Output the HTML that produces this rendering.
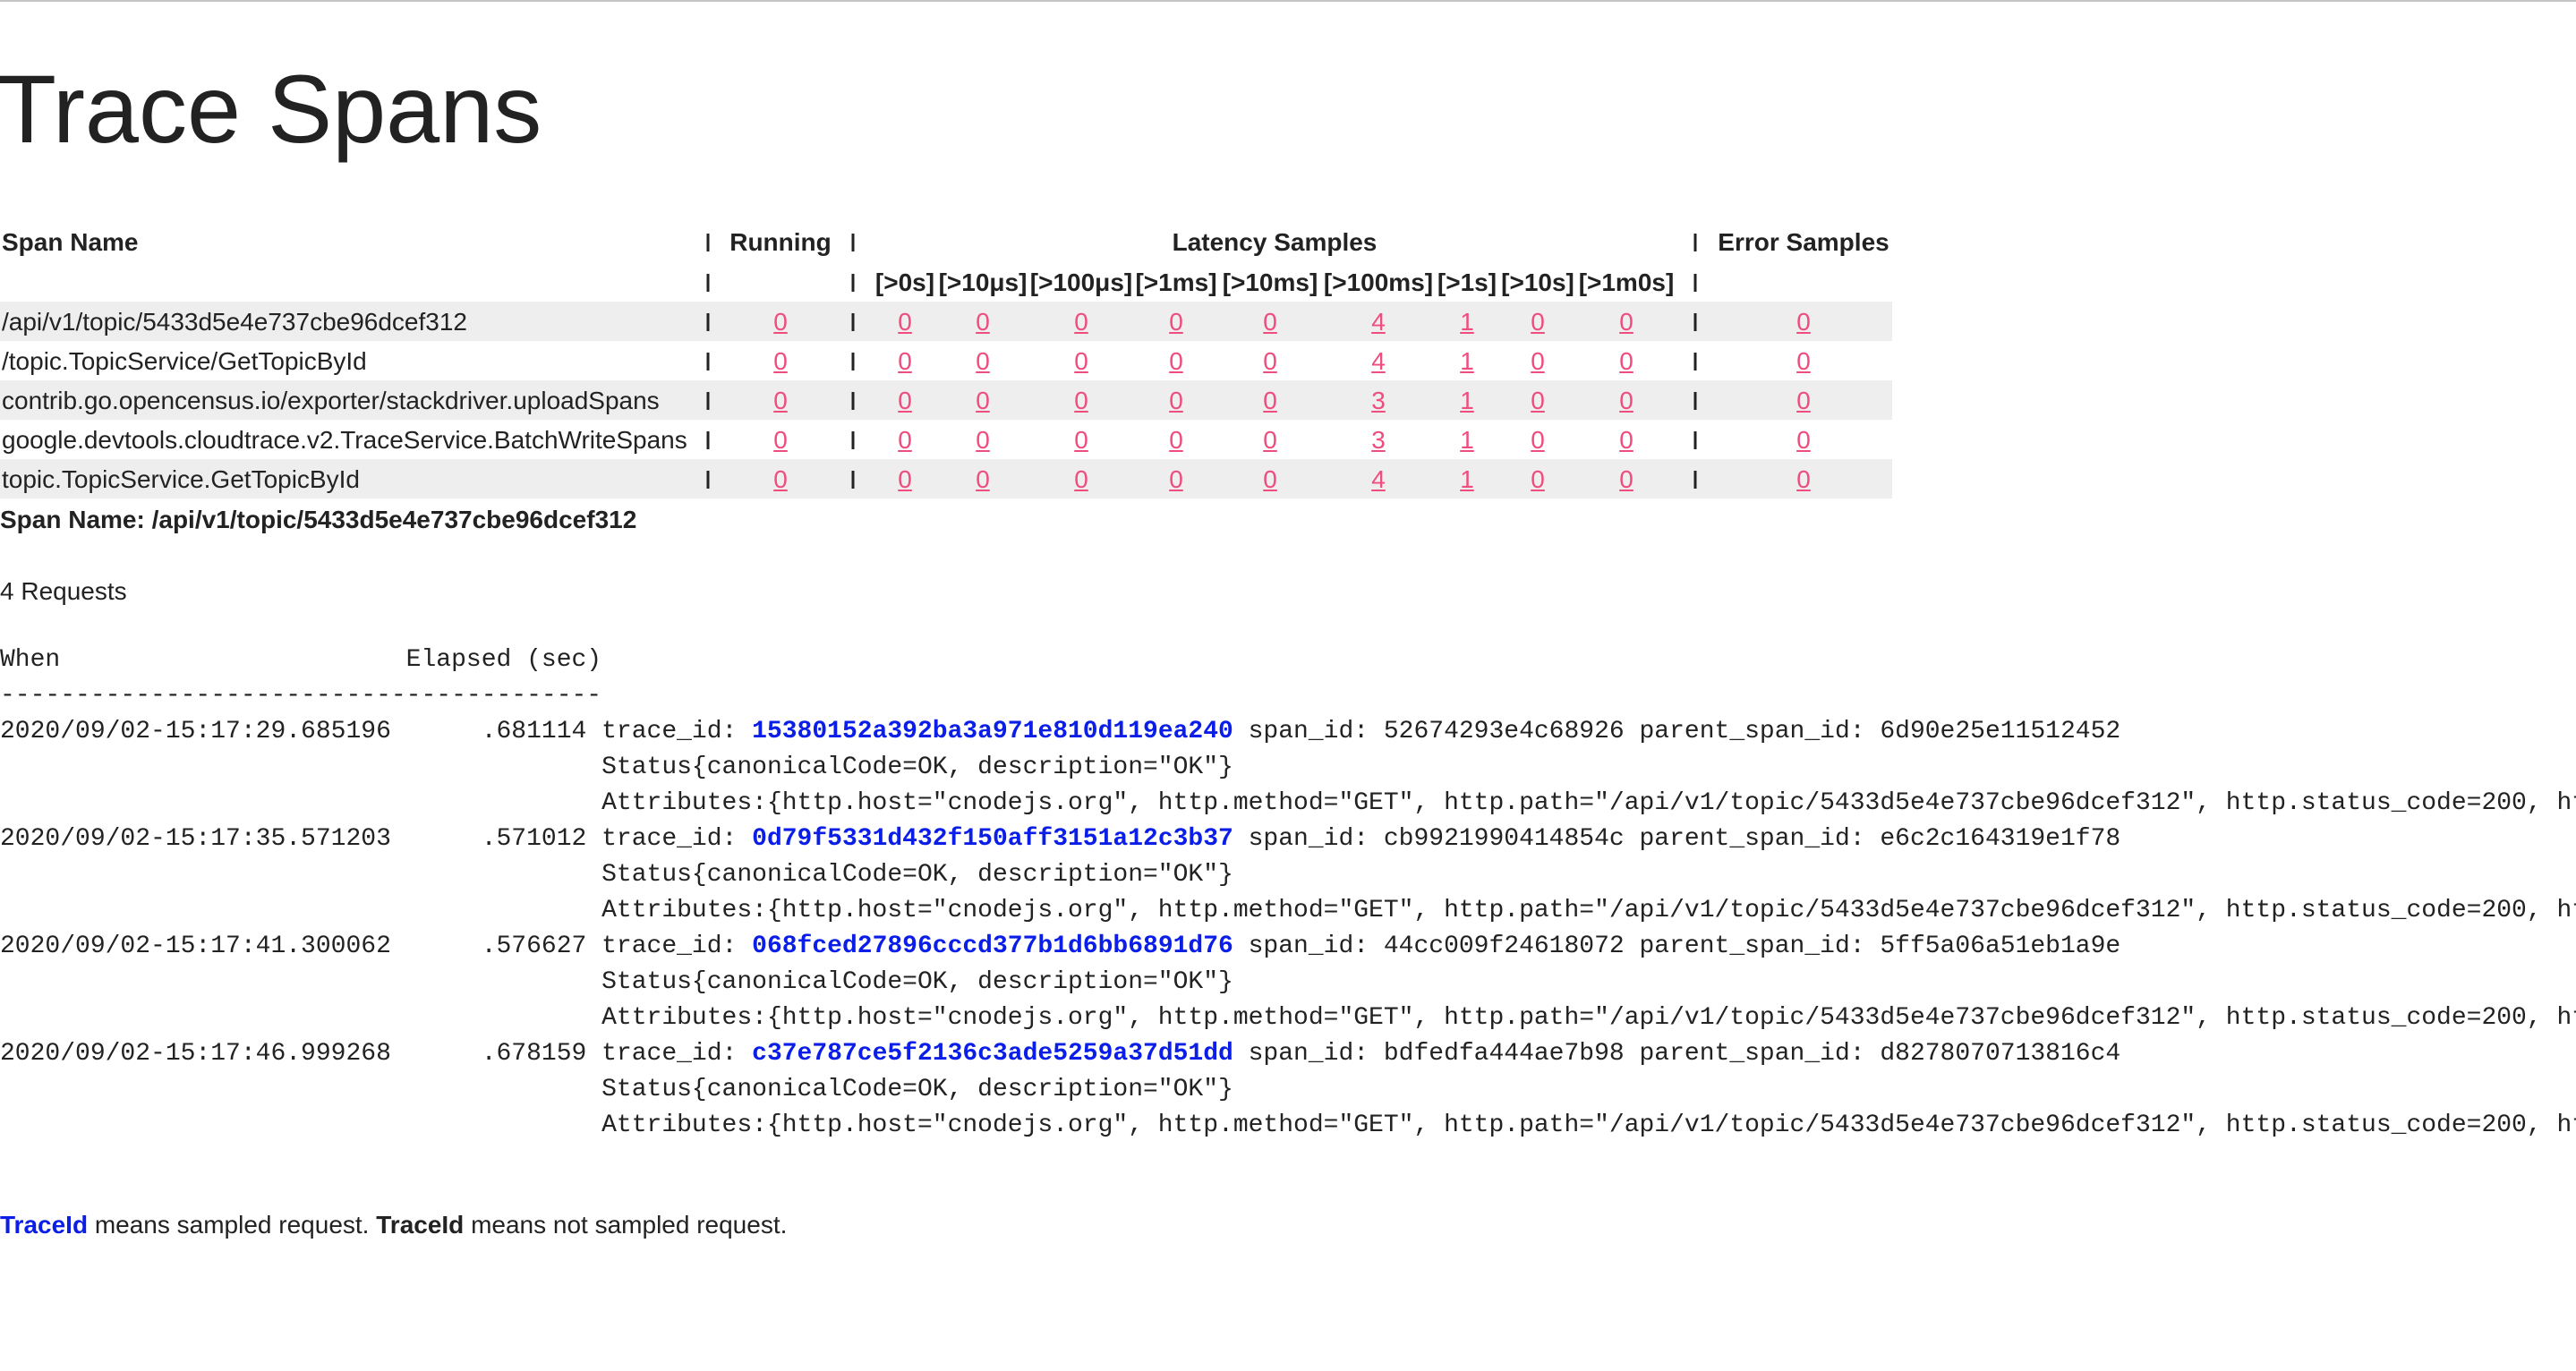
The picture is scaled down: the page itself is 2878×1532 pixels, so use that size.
<!DOCTYPE html>
<html><head><meta charset="utf-8">
<style>
html,body{margin:0;padding:0;background:#fff;width:2878px;height:1532px;overflow:hidden;position:relative;color:#222;font-family:"Liberation Sans",Arial,sans-serif;}
.topline{position:absolute;left:0;top:0;width:2878px;height:2px;background:#c4c4c4;}
.t{position:absolute;white-space:nowrap;transform:translateY(-50%);font-size:28px;line-height:1;}
.c{position:absolute;white-space:nowrap;transform:translate(-50%,-50%);font-size:28px;line-height:1;}
.b{font-weight:bold;}
.band{position:absolute;left:0;width:2114px;height:44px;background:#eeeeee;}
.bar{position:absolute;width:3px;height:20px;background:#222;transform:translate(-50%,-50%);}
a{color:#ee4d7e;text-decoration:underline;}
.wrap{position:absolute;left:0;top:0;width:2878px;height:1532px;overflow:hidden;}
.mono{position:absolute;left:0;top:718px;font-family:"Liberation Mono","Courier New",monospace;font-size:28px;line-height:40px;white-space:pre;color:#222;margin:0;}
.mono b{color:#0a1ee8;font-weight:bold;}
</style></head><body><div class="wrap">
<div class="topline"></div>
<div class="t" style="left:-3px;top:122px;font-size:108px;">Trace Spans</div>

<div class="band" style="top:337px"></div>
<div class="band" style="top:425px"></div>
<div class="band" style="top:513px"></div>

<div class="t b" style="left:2px;top:271px">Span Name</div>
<div class="c b" style="left:872px;top:271px">Running</div>
<div class="c b" style="left:1424px;top:271px">Latency Samples</div>
<div class="c b" style="left:2015px;top:271px">Error Samples</div>

<div class="c b" style="left:1011px;top:316px">[&gt;0s]</div>
<div class="c b" style="left:1098px;top:316px">[&gt;10μs]</div>
<div class="c b" style="left:1208px;top:316px">[&gt;100μs]</div>
<div class="c b" style="left:1314px;top:316px">[&gt;1ms]</div>
<div class="c b" style="left:1419px;top:316px">[&gt;10ms]</div>
<div class="c b" style="left:1540px;top:316px">[&gt;100ms]</div>
<div class="c b" style="left:1639px;top:316px">[&gt;1s]</div>
<div class="c b" style="left:1718px;top:316px">[&gt;10s]</div>
<div class="c b" style="left:1817px;top:316px">[&gt;1m0s]</div>

<div class="bar" style="left:791px;top:271px"></div><div class="bar" style="left:953px;top:271px"></div><div class="bar" style="left:1894px;top:271px"></div>
<div class="bar" style="left:791px;top:316px"></div><div class="bar" style="left:953px;top:316px"></div><div class="bar" style="left:1894px;top:316px"></div>
<div class="bar" style="left:791px;top:360px"></div><div class="bar" style="left:953px;top:360px"></div><div class="bar" style="left:1894px;top:360px"></div>
<div class="bar" style="left:791px;top:404px"></div><div class="bar" style="left:953px;top:404px"></div><div class="bar" style="left:1894px;top:404px"></div>
<div class="bar" style="left:791px;top:448px"></div><div class="bar" style="left:953px;top:448px"></div><div class="bar" style="left:1894px;top:448px"></div>
<div class="bar" style="left:791px;top:492px"></div><div class="bar" style="left:953px;top:492px"></div><div class="bar" style="left:1894px;top:492px"></div>
<div class="bar" style="left:791px;top:536px"></div><div class="bar" style="left:953px;top:536px"></div><div class="bar" style="left:1894px;top:536px"></div>

<div class="t" style="left:2px;top:360px">/api/v1/topic/5433d5e4e737cbe96dcef312</div>
<div class="c" style="left:872px;top:360px"><a>0</a></div>
<div class="c" style="left:1011px;top:360px"><a>0</a></div>
<div class="c" style="left:1098px;top:360px"><a>0</a></div>
<div class="c" style="left:1208px;top:360px"><a>0</a></div>
<div class="c" style="left:1314px;top:360px"><a>0</a></div>
<div class="c" style="left:1419px;top:360px"><a>0</a></div>
<div class="c" style="left:1540px;top:360px"><a>4</a></div>
<div class="c" style="left:1639px;top:360px"><a>1</a></div>
<div class="c" style="left:1718px;top:360px"><a>0</a></div>
<div class="c" style="left:1817px;top:360px"><a>0</a></div>
<div class="c" style="left:2015px;top:360px"><a>0</a></div>

<div class="t" style="left:2px;top:404px">/topic.TopicService/GetTopicById</div>
<div class="c" style="left:872px;top:404px"><a>0</a></div>
<div class="c" style="left:1011px;top:404px"><a>0</a></div>
<div class="c" style="left:1098px;top:404px"><a>0</a></div>
<div class="c" style="left:1208px;top:404px"><a>0</a></div>
<div class="c" style="left:1314px;top:404px"><a>0</a></div>
<div class="c" style="left:1419px;top:404px"><a>0</a></div>
<div class="c" style="left:1540px;top:404px"><a>4</a></div>
<div class="c" style="left:1639px;top:404px"><a>1</a></div>
<div class="c" style="left:1718px;top:404px"><a>0</a></div>
<div class="c" style="left:1817px;top:404px"><a>0</a></div>
<div class="c" style="left:2015px;top:404px"><a>0</a></div>

<div class="t" style="left:2px;top:448px">contrib.go.opencensus.io/exporter/stackdriver.uploadSpans</div>
<div class="c" style="left:872px;top:448px"><a>0</a></div>
<div class="c" style="left:1011px;top:448px"><a>0</a></div>
<div class="c" style="left:1098px;top:448px"><a>0</a></div>
<div class="c" style="left:1208px;top:448px"><a>0</a></div>
<div class="c" style="left:1314px;top:448px"><a>0</a></div>
<div class="c" style="left:1419px;top:448px"><a>0</a></div>
<div class="c" style="left:1540px;top:448px"><a>3</a></div>
<div class="c" style="left:1639px;top:448px"><a>1</a></div>
<div class="c" style="left:1718px;top:448px"><a>0</a></div>
<div class="c" style="left:1817px;top:448px"><a>0</a></div>
<div class="c" style="left:2015px;top:448px"><a>0</a></div>

<div class="t" style="left:2px;top:492px">google.devtools.cloudtrace.v2.TraceService.BatchWriteSpans</div>
<div class="c" style="left:872px;top:492px"><a>0</a></div>
<div class="c" style="left:1011px;top:492px"><a>0</a></div>
<div class="c" style="left:1098px;top:492px"><a>0</a></div>
<div class="c" style="left:1208px;top:492px"><a>0</a></div>
<div class="c" style="left:1314px;top:492px"><a>0</a></div>
<div class="c" style="left:1419px;top:492px"><a>0</a></div>
<div class="c" style="left:1540px;top:492px"><a>3</a></div>
<div class="c" style="left:1639px;top:492px"><a>1</a></div>
<div class="c" style="left:1718px;top:492px"><a>0</a></div>
<div class="c" style="left:1817px;top:492px"><a>0</a></div>
<div class="c" style="left:2015px;top:492px"><a>0</a></div>

<div class="t" style="left:2px;top:536px">topic.TopicService.GetTopicById</div>
<div class="c" style="left:872px;top:536px"><a>0</a></div>
<div class="c" style="left:1011px;top:536px"><a>0</a></div>
<div class="c" style="left:1098px;top:536px"><a>0</a></div>
<div class="c" style="left:1208px;top:536px"><a>0</a></div>
<div class="c" style="left:1314px;top:536px"><a>0</a></div>
<div class="c" style="left:1419px;top:536px"><a>0</a></div>
<div class="c" style="left:1540px;top:536px"><a>4</a></div>
<div class="c" style="left:1639px;top:536px"><a>1</a></div>
<div class="c" style="left:1718px;top:536px"><a>0</a></div>
<div class="c" style="left:1817px;top:536px"><a>0</a></div>
<div class="c" style="left:2015px;top:536px"><a>0</a></div>

<div class="t b" style="left:0;top:581px">Span Name: /api/v1/topic/5433d5e4e737cbe96dcef312</div>
<div class="t" style="left:0;top:661px">4 Requests</div>

<pre class="mono">When                       Elapsed (sec)
----------------------------------------
2020/09/02-15:17:29.685196      .681114 trace_id: <b>15380152a392ba3a971e810d119ea240</b> span_id: 52674293e4c68926 parent_span_id: 6d90e25e11512452
                                        Status{canonicalCode=OK, description="OK"}
                                        Attributes:{http.host="cnodejs.org", http.method="GET", http.path="/api/v1/topic/5433d5e4e737cbe96dcef312", http.status_code=200, http.url}
2020/09/02-15:17:35.571203      .571012 trace_id: <b>0d79f5331d432f150aff3151a12c3b37</b> span_id: cb9921990414854c parent_span_id: e6c2c164319e1f78
                                        Status{canonicalCode=OK, description="OK"}
                                        Attributes:{http.host="cnodejs.org", http.method="GET", http.path="/api/v1/topic/5433d5e4e737cbe96dcef312", http.status_code=200, http.url}
2020/09/02-15:17:41.300062      .576627 trace_id: <b>068fced27896cccd377b1d6bb6891d76</b> span_id: 44cc009f24618072 parent_span_id: 5ff5a06a51eb1a9e
                                        Status{canonicalCode=OK, description="OK"}
                                        Attributes:{http.host="cnodejs.org", http.method="GET", http.path="/api/v1/topic/5433d5e4e737cbe96dcef312", http.status_code=200, http.url}
2020/09/02-15:17:46.999268      .678159 trace_id: <b>c37e787ce5f2136c3ade5259a37d51dd</b> span_id: bdfedfa444ae7b98 parent_span_id: d8278070713816c4
                                        Status{canonicalCode=OK, description="OK"}
                                        Attributes:{http.host="cnodejs.org", http.method="GET", http.path="/api/v1/topic/5433d5e4e737cbe96dcef312", http.status_code=200, http.url}</pre>

<div class="t" style="left:0;top:1369px;font-size:28px"><b style="color:#0a1ee8">TraceId</b> means sampled request. <b>TraceId</b> means not sampled request.</div>
</div></body></html>
